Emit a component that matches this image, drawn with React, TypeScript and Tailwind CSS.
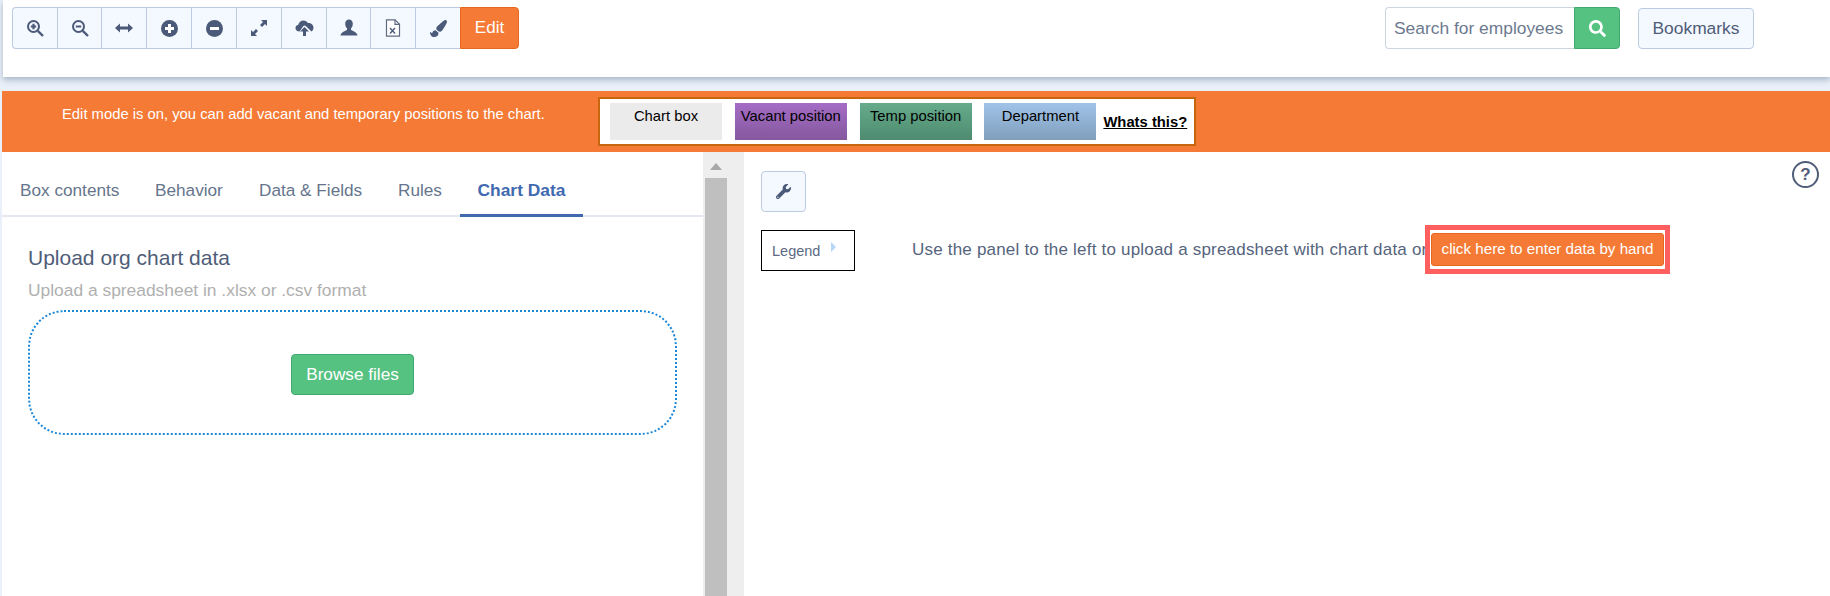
import React from 'react';
import { FaPaintBrush, FaSearch, FaWrench } from 'react-icons/fa';

const INK = '#4a5a78';

function ZoomIcon({ plus }: { plus?: boolean }) {
  return (
    <svg width="18" height="18" viewBox="0 0 18 18" fill="none" stroke={INK}>
      <circle cx="7.5" cy="7.500" r="5.500" strokeWidth="2" />
      <path d="M11.800 11.800 17 17" strokeWidth="2.400" />
      <path d="M4.800 7.500h5.400" strokeWidth="2.200" />
      {plus && <path d="M7.500 4.800v5.400" strokeWidth="2.200" />}
    </svg>
  );
}

function FitWidthIcon() {
  return (
    <svg width="18" height="12" viewBox="0 0 18 12" fill={INK}>
      <path d="M0 6 5 1.500v3h8v-3L18 6l-5 4.500v-3H5v3z" />
    </svg>
  );
}

function CircleIcon({ plus }: { plus?: boolean }) {
  return (
    <svg width="17" height="17" viewBox="0 0 17 17">
      <circle cx="8.500" cy="8.500" r="8.500" fill={INK} />
      <path d="M4 8.500h9" stroke="#fff" strokeWidth="3" />
      {plus && <path d="M8.500 4v9" stroke="#fff" strokeWidth="3" />}
    </svg>
  );
}

function ExpandIcon() {
  return (
    <svg width="18" height="18" viewBox="0 0 18 18" fill={INK}>
      <path d="M11 1h6v6l-2-2-3 3-2-2 3-3z" />
      <path d="M7 17H1v-6l2 2 3-3 2 2-3 3z" />
    </svg>
  );
}

function CloudUploadIcon() {
  return (
    <svg width="19" height="18" viewBox="0 0 19 18" fill={INK}>
      <path d="M4.500 12.500C2 12.500 .5 11 .5 9c0-1.800 1.200-3 2.800-3.300C3.900 3.300 6 1.500 8.500 1.500c2 0 3.500 1 4.400 2.500 3-.2 5.600 1.800 5.600 4.700 0 1.500-.7 2.900-2 3.800l-5.500-5.200a2 2 0 0 0-2.800 0z" />
      <path d="M9.500 8 14 12.500h-3V17H8v-4.500H5z" />
    </svg>
  );
}

function UserIcon() {
  return (
    <svg width="18" height="18" viewBox="0 0 18 18" fill={INK}>
      <path d="M9 .5c2.400 0 3.800 1.800 3.800 4.200 0 2-.8 3.600-1.800 4.700v1.600c1.500 1 6 1.800 6.500 5.500H.5c.5-3.700 5-4.500 6.500-5.500V9.400C6 8.300 5.200 6.700 5.200 4.700 5.200 2.300 6.600.5 9 .5z" />
    </svg>
  );
}

function SheetIcon() {
  return (
    <svg width="16" height="18" viewBox="0 0 16 18" fill="none">
      <path d="M1.500.8H10l4.500 4.500v11.900h-13z" fill="#fff" stroke="#5f6b80" strokeWidth="1.200" />
      <path d="M10 .8v4.500h4.500" stroke="#5f6b80" strokeWidth="1.200" />
      <path d="M5 9l5 5.500M10 9l-5 5.500" stroke={INK} strokeWidth="1.400" />
    </svg>
  );
}

const TOOLS: { icon: React.ReactNode; width: string }[] = [
  { icon: <ZoomIcon plus />, width: 'w-[45px]' },
  { icon: <ZoomIcon />, width: 'w-[44px]' },
  { icon: <FitWidthIcon />, width: 'w-[45px]' },
  { icon: <CircleIcon plus />, width: 'w-[45px]' },
  { icon: <CircleIcon />, width: 'w-[45px]' },
  { icon: <ExpandIcon />, width: 'w-[45px]' },
  { icon: <CloudUploadIcon />, width: 'w-[45px]' },
  { icon: <UserIcon />, width: 'w-[44px]' },
  { icon: <SheetIcon />, width: 'w-[45px]' },
  { icon: <FaPaintBrush size={17} color={INK} />, width: 'w-[44px]' },
];

const SWATCHES = [
  { label: 'Chart box', bg: 'bg-[#ebebeb]' },
  { label: 'Vacant position', bg: 'bg-gradient-to-b from-[#a56cc6] to-[#85599e]' },
  { label: 'Temp position', bg: 'bg-gradient-to-b from-[#66ab8b] to-[#4e8b70]' },
  { label: 'Department', bg: 'bg-gradient-to-b from-[#a1c3e8] to-[#7f9fbc]' },
];

const TABS = [
  { label: 'Box contents', width: 'w-[135px]' },
  { label: 'Behavior', width: 'w-[104px]' },
  { label: 'Data & Fields', width: 'w-[139px]' },
  { label: 'Rules', width: 'w-[78px]' },
];

export default function App() {
  return (
    <div className="h-[596px] w-[1830px] overflow-hidden bg-[#e9f0f9] font-['Liberation_Sans',Arial,sans-serif]">
      {/* top toolbar */}
      <header className="ml-[3px] flex h-[77px] items-start bg-white pl-[9px] pr-[76px] pt-[7px] shadow-[0_3px_6px_rgba(90,110,140,0.45)]">
        <div className="flex h-[42px]">
          <div className="flex overflow-hidden rounded-l-[4px] border border-r-0 border-[#bccbdf] bg-[#f4f8ff]">
            {TOOLS.map((tool, i) => (
              <button
                key={i}
                className={`flex items-center justify-center border-r border-[#bccbdf] last:border-r-0 ${tool.width}`}
              >
                {tool.icon}
              </button>
            ))}
          </div>
          <button className="w-[59px] rounded-r-[4px] border border-[#e8671f] bg-[#f57a35] text-[17px] text-white">
            Edit
          </button>
        </div>
        <div className="ml-auto flex h-[42px]">
          <div className="flex w-[189px] items-center whitespace-nowrap rounded-l-[4px] border border-r-0 border-[#cdd5e0] pl-[8px] text-[17.4px] text-[#6c7a8f]">
            Search for employees
          </div>
          <button className="flex w-[46px] items-center justify-center rounded-r-[4px] border border-[#42a86f] bg-[#56c282]">
            <FaSearch size={17} color="#fff" />
          </button>
        </div>
        <button className="ml-[18px] mt-[1px] h-[41px] w-[116px] rounded-[4px] border border-[#bccbdf] bg-[#f4f8ff] text-[17.4px] text-[#4f5d78]">
          Bookmarks
        </button>
      </header>

      {/* edit mode banner */}
      <div className="ml-[2px] mt-[14px] flex h-[61px] bg-[#f57a35]">
        <p className="w-[596px] pl-[60px] pt-[13px] text-[14.8px] leading-[20px] text-white">
          Edit mode is on, you can add vacant and temporary positions to the chart.
        </p>
        <div className="mt-[6px] flex h-[49px] w-[598px] items-start border-2 border-[#c8650f] bg-white pl-[10px] pt-[4px]">
          <div className="flex shrink-0 gap-[12.8px]">
            {SWATCHES.map((s) => (
              <div
                key={s.label}
                className={`h-[37px] w-[112px] whitespace-nowrap pt-[3px] text-center text-[14.8px] leading-[20px] text-black ${s.bg}`}
              >
                {s.label}
              </div>
            ))}
          </div>
          <a className="ml-[7px] mt-[9px] whitespace-nowrap text-[14.8px] font-bold leading-[20px] text-black underline">
            Whats this?
          </a>
        </div>
      </div>

      <div className="ml-[2px] flex h-[444px] bg-white">
        {/* left panel */}
        <div className="w-[701px]">
          <div className="flex h-[65px] border-b-2 border-[#e4e9f1] pl-[2px]">
            {TABS.map((tab) => (
              <div key={tab.label} className={`pl-[16px] pt-[28px] text-[17.2px] leading-[20px] text-[#66758c] ${tab.width}`}>
                {tab.label}
              </div>
            ))}
            <div className="-mb-[2px] h-[65px] w-[123px] border-b-[3px] border-[#4169b0] pt-[28px] text-center text-[17.4px] font-bold leading-[20px] text-[#4169b0]">
              Chart Data
            </div>
          </div>
          <div className="pl-[26px] pr-[26px] pt-[29px]">
            <h2 className="text-[21px] font-normal leading-[24px] text-[#4f5d78]">Upload org chart data</h2>
            <p className="mt-[10px] text-[17.4px] leading-[20px] text-[#b0b0b0]">Upload a spreadsheet in .xlsx or .csv format</p>
            <div className="mt-[10px] flex h-[125px] items-center justify-center rounded-[36px] border-2 border-dotted border-[#1b87d8] pt-[4px]">
              <button className="h-[41px] w-[123px] rounded-[4px] border border-[#42a86f] bg-[#56c282] text-[17.2px] text-white">
                Browse files
              </button>
            </div>
          </div>
        </div>

        {/* scrollbar */}
        <div className="w-[41px] bg-[#eeeeee] pl-[2px]">
          <div className="w-[22px]">
            <div className="flex h-[26px] items-center justify-center pt-[2px]">
              <div className="h-0 w-0 border-x-[6px] border-b-[7px] border-x-transparent border-b-[#a8a8a8]" />
            </div>
            <div className="h-[418px] bg-[#bfbfbf]" />
          </div>
        </div>

        {/* right panel */}
        <div className="relative flex-1 rounded-tl-[3px] bg-white pl-[17px] pt-[19px]">
          <button className="flex h-[41px] w-[45px] items-center justify-center rounded-[4px] border border-[#bccbdf] bg-[#f4f8ff]">
            <FaWrench size={15} color={INK} />
          </button>
          <div className="mt-[18px] flex items-start">
            <div className="flex h-[41px] w-[94px] border border-black pl-[10px] pt-[10px] text-[14.5px] leading-[20px] text-[#5b6a82]">
              Legend
              <span className="ml-[11px] mt-[1px] h-0 w-0 border-y-[5px] border-l-[5px] border-y-transparent border-l-[#b7d6f8]" />
            </div>
            <p className="ml-[57px] mt-[10px] w-[513px] whitespace-nowrap text-[17px] leading-[20px] tracking-[0.2px] text-[#55647d]">
              Use the panel to the left to upload a spreadsheet with chart data or
            </p>
            <div className="-mt-[5px] flex h-[49px] w-[245px] items-center justify-center border-[5px] border-[#ff5f5f] bg-white">
              <button className="h-[33px] w-[233px] whitespace-nowrap rounded-[3px] border border-[#e8671f] bg-[#f57a35] text-[15.2px] text-white">
                click here to enter data by hand
              </button>
            </div>
          </div>
          <div className="absolute right-[11px] top-[9px] flex h-[27px] w-[27px] items-center justify-center rounded-full border-2 border-[#4f5d78] text-[17px] font-bold leading-none text-[#4f5d78]">
            ?
          </div>
        </div>
      </div>
    </div>
  );
}
